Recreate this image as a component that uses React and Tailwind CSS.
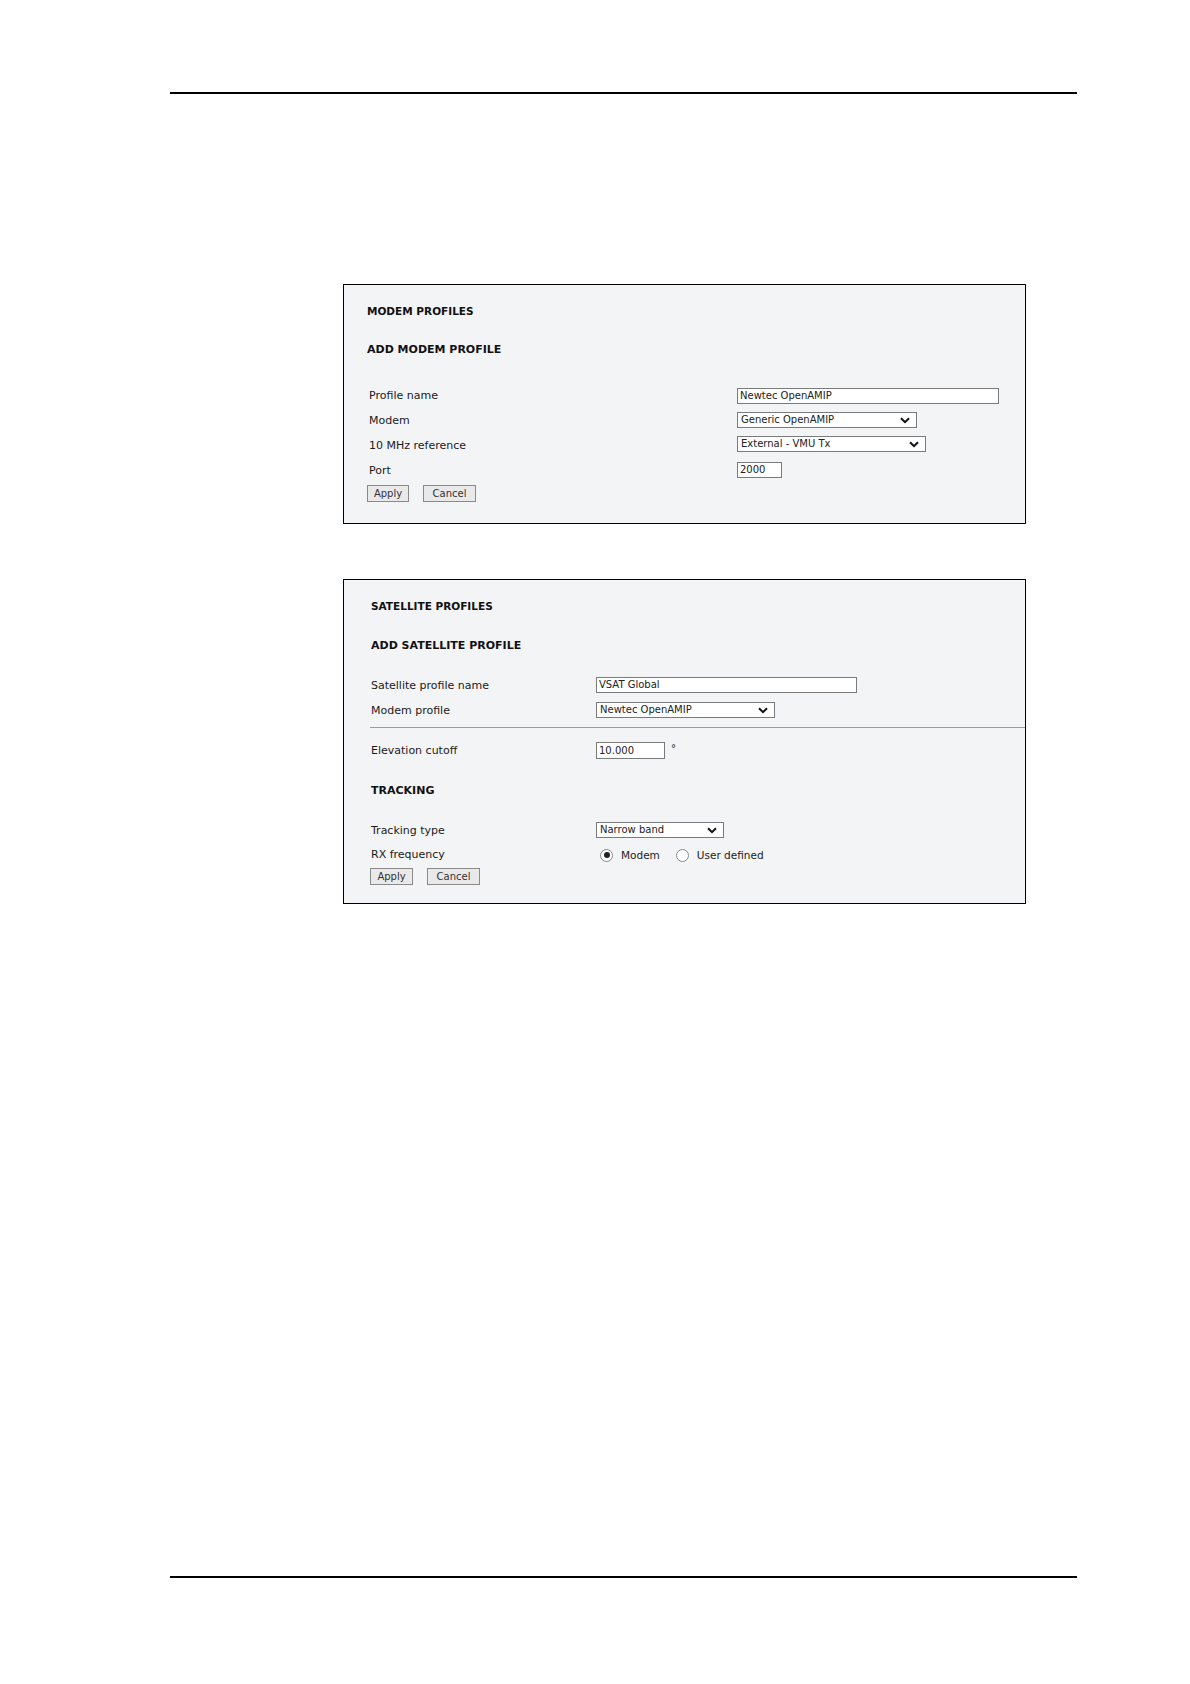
import React from "react";

const FONT = "font-['DejaVu_Sans','Verdana',sans-serif]";

function Chevron() {
  return (
    <svg width="10" height="7" viewBox="0 0 10 7" className="shrink-0">
      <polyline points="1,1.2 5,5.2 9,1.2" fill="none" stroke="#111" strokeWidth="2" />
    </svg>
  );
}

function TextBox({ value, w, h = "h-[16px]" }) {
  return (
    <div className={`${w} ${h} border border-[#7a7a7a] bg-white flex items-center pl-[2px] text-[10px] text-[#222] leading-none`}>
      {value}
    </div>
  );
}

function SelectBox({ value, w, h = "h-[16px]" }) {
  return (
    <div className={`${w} ${h} border border-[#7a7a7a] bg-white flex items-center justify-between pl-[3px] pr-[6px] text-[10px] text-[#222] leading-none`}>
      <span>{value}</span>
      <Chevron />
    </div>
  );
}

function Btn({ children, w }) {
  return (
    <div className={`${w} h-[17px] border border-[#8a8a8a] bg-[#e9e9e9] flex items-center justify-center text-[10px] text-[#333] leading-none`}>
      {children}
    </div>
  );
}

function Radio({ checked }) {
  return (
    <div className="w-[13px] h-[13px] rounded-full border border-[#8a8a8a] bg-white flex items-center justify-center shrink-0">
      {checked && <div className="w-[6px] h-[6px] rounded-full bg-[#222]" />}
    </div>
  );
}

function ModemProfileBox() {
  const labels = ["Profile name", "Modem", "10 MHz reference", "Port"];

  return (
    <div className="ml-[343px] mt-[190px] w-[683px] h-[240px] border border-black bg-[#f3f4f6] pl-[23px] pt-[20px]">
      <div className="h-[12px] leading-[12px] text-[10.5px] font-bold text-[#111]">MODEM PROFILES</div>
      <div className="mt-[26px] h-[14px] leading-[14px] text-[11px] font-bold text-[#111]">ADD MODEM PROFILE</div>

      <div className="mt-[31px] flex h-[97px]">
        {/* labels on a 25px pitch, fields spaced a bit unevenly like the original */}
        <div className="w-[370px] pl-[2px]">
          {labels.map((l) => (
            <div key={l} className="h-[25px] leading-[16px] text-[11px] text-[#1a1a1a]">{l}</div>
          ))}
        </div>
        <div className="flex flex-col">
          <TextBox value="Newtec OpenAMIP" w="w-[262px]" />
          <div className="mt-[8px]"><SelectBox value="Generic OpenAMIP" w="w-[180px]" /></div>
          <div className="mt-[8px]"><SelectBox value="External - VMU Tx" w="w-[189px]" /></div>
          <div className="mt-[10px]"><TextBox value="2000" w="w-[45px]" /></div>
        </div>
      </div>

      <div className="flex gap-[14px]">
        <Btn w="w-[42px]">Apply</Btn>
        <Btn w="w-[53px]">Cancel</Btn>
      </div>
    </div>
  );
}

function SatelliteProfileBox() {
  return (
    <div className="ml-[343px] mt-[55px] w-[683px] h-[325px] border border-black bg-[#f3f4f6] pt-[20px]">
      <div className="pl-[27px]">
        <div className="h-[12px] leading-[12px] text-[10.5px] font-bold text-[#111]">SATELLITE PROFILES</div>
        <div className="mt-[27px] h-[14px] leading-[14px] text-[11px] font-bold text-[#111]">ADD SATELLITE PROFILE</div>

        <div className="mt-[24px]">
          <div className="flex h-[25px] items-start">
            <div className="w-[225px] h-[18px] leading-[18px] text-[11px] text-[#1a1a1a]">Satellite profile name</div>
            <TextBox value="VSAT Global" w="w-[261px]" />
          </div>
          <div className="flex h-[25px] items-start">
            <div className="w-[225px] h-[18px] leading-[18px] text-[11px] text-[#1a1a1a]">Modem profile</div>
            <SelectBox value="Newtec OpenAMIP" w="w-[179px]" />
          </div>
        </div>
      </div>

      <div className="ml-[26px] h-px bg-[#9a9a9a]" />

      <div className="pl-[27px]">
        <div className="mt-[14px] flex items-center h-[17px]">
          <div className="w-[225px] leading-[17px] text-[11px] text-[#1a1a1a]">Elevation cutoff</div>
          <TextBox value="10.000" w="w-[69px]" h="h-[17px]" />
          <span className="ml-[6px] text-[10px] text-[#222] leading-none -mt-[3px]">°</span>
        </div>

        <div className="mt-[25px] h-[14px] leading-[14px] text-[11px] font-bold text-[#111]">TRACKING</div>

        <div className="mt-[24px] flex items-start h-[16px]">
          <div className="w-[225px] h-[18px] leading-[18px] text-[11px] text-[#1a1a1a]">Tracking type</div>
          <SelectBox value="Narrow band" w="w-[128px]" />
        </div>

        <div className="mt-[9px] flex items-center h-[16px]">
          <div className="w-[225px] leading-[16px] text-[11px] text-[#1a1a1a]">RX frequency</div>
          <div className="ml-[4px] flex items-center">
            <Radio checked />
            <span className="ml-[8px] text-[10.5px] text-[#222] leading-none">Modem</span>
            <div className="ml-[16px]"><Radio /></div>
            <span className="ml-[8px] text-[10.5px] text-[#222] leading-none">User defined</span>
          </div>
        </div>

        <div className="mt-[5px] -ml-[1px] flex gap-[14px]">
          <Btn w="w-[43px]">Apply</Btn>
          <Btn w="w-[53px]">Cancel</Btn>
        </div>
      </div>
    </div>
  );
}

export default function App() {
  return (
    <div className={`w-[1190px] h-[1684px] bg-white pt-[92px] ${FONT}`}>
      <div className="ml-[170px] w-[907px] h-[2px] bg-black" />
      <ModemProfileBox />
      <SatelliteProfileBox />
      <div className="ml-[170px] mt-[672px] w-[907px] h-[2px] bg-black" />
    </div>
  );
}
